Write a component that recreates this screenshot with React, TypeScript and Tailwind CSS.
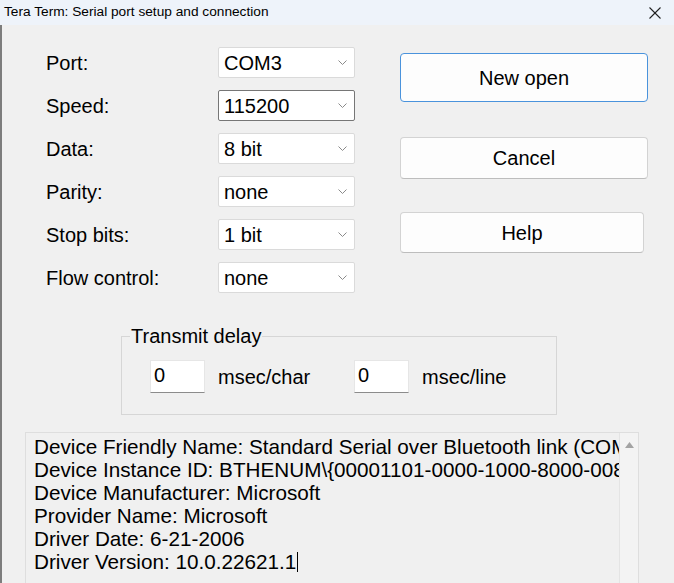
import React from 'react'

const FONT = { fontFamily: '"Liberation Sans", Arial, sans-serif' }

const fields: { label: string; value: string; focused?: boolean }[] = [
  { label: 'Port:', value: 'COM3' },
  { label: 'Speed:', value: '115200', focused: true },
  { label: 'Data:', value: '8 bit' },
  { label: 'Parity:', value: 'none' },
  { label: 'Stop bits:', value: '1 bit' },
  { label: 'Flow control:', value: 'none' },
]

const infoLines = [
  'Device Friendly Name: Standard Serial over Bluetooth link (COM3)',
  'Device Instance ID: BTHENUM\\{00001101-0000-1000-8000-00805F9B34FB}',
  'Device Manufacturer: Microsoft',
  'Provider Name: Microsoft',
  'Driver Date: 6-21-2006',
]

function Combo({ value, focused }: { value: string; focused?: boolean }): React.JSX.Element {
  return (
    <div
      className={
        'flex h-[31px] w-[137px] items-center justify-between rounded-[2px] border bg-white pl-[5px] pr-[7px] ' +
        (focused ? 'border-[#767676]' : 'border-[#dadada]')
      }
    >
      <span className="text-[20px] leading-none text-black">{value}</span>
      <svg width="9" height="5" viewBox="0 0 9 5" aria-hidden="true">
        <polyline points="0.5,0.5 4.5,4.5 8.5,0.5" fill="none" stroke="#8a8a8a" strokeWidth="1" />
      </svg>
    </div>
  )
}

function DelayInput(): React.JSX.Element {
  return (
    <div className="flex h-[33px] w-[55px] items-start border border-[#e6e6e6] border-b-[#8c8c8c] bg-white pl-[3px] pt-[4px]">
      <span className="text-[20px] leading-[20px] text-black">0</span>
    </div>
  )
}

export default function App(): React.JSX.Element {
  return (
    <div className="flex h-[583px] w-[674px] flex-col overflow-hidden bg-[#f0f0f0]" style={FONT}>
      {/* title bar */}
      <div className="flex h-[25px] shrink-0 items-center justify-between bg-[#eef3fa] pl-[4px] pr-[13px]">
        <span className="text-[13.7px] text-black">Tera Term: Serial port setup and connection</span>
        <svg width="12" height="12" viewBox="0 0 12 12" aria-hidden="true">
          <line x1="0.5" y1="0.5" x2="11.5" y2="11.5" stroke="#222" strokeWidth="1.1" />
          <line x1="11.5" y1="0.5" x2="0.5" y2="11.5" stroke="#222" strokeWidth="1.1" />
        </svg>
      </div>

      <div className="flex min-h-0 flex-1 flex-col border-l-2 border-[#7d7d7d]">
        {/* settings + buttons */}
        <div className="flex pl-[44px] pt-[22px]">
          <div className="flex flex-col gap-[12px]">
            {fields.map((f) => (
              <div key={f.label} className="flex items-center">
                <span className="w-[172px] text-[20px] text-black">{f.label}</span>
                <Combo value={f.value} focused={f.focused} />
              </div>
            ))}
          </div>
          <div className="ml-[45px] flex flex-col text-[20px] text-black">
            <button className="mt-[6px] h-[49px] w-[248px] rounded-[4px] border border-[#4a93dc] bg-[#fdfdfd]">
              New open
            </button>
            <button className="mt-[35px] h-[42px] w-[248px] rounded-[4px] border border-[#d3d3d3] border-b-[#bdbdbd] bg-[#fdfdfd]">
              Cancel
            </button>
            <button className="mt-[33px] h-[41px] w-[244px] rounded-[4px] border border-[#d3d3d3] border-b-[#bdbdbd] bg-[#fdfdfd]">
              Help
            </button>
          </div>
        </div>

        {/* transmit delay */}
        <fieldset className="ml-[119px] mt-[32px] w-[436px] border border-[#d6d6d6] p-0">
          <legend className="ml-[8px] px-[1px] text-[20px] leading-[23px] text-black">Transmit delay</legend>
          <div className="flex items-center pb-[21px] pl-[28px] pt-[12px] text-[20px] text-black">
            <DelayInput />
            <span className="ml-[13px] w-[136px]">msec/char</span>
            <DelayInput />
            <span className="ml-[13px]">msec/line</span>
          </div>
        </fieldset>

        {/* device info, clipped on the right like the original edit box */}
        <div className="ml-[23px] mt-[17px] flex min-h-0 w-[614px] flex-1 border border-b-0 border-[#dedede]">
          <div className="min-w-0 flex-1 overflow-hidden whitespace-nowrap pl-[8px] pt-[2px] text-[20.7px] leading-[23px] text-black">
            {infoLines.map((l) => (
              <div key={l}>{l}</div>
            ))}
            <div className="flex items-center">
              <span>Driver Version: 10.0.22621.1</span>
              <span className="ml-[1px] inline-block h-[20px] w-px bg-black" />
            </div>
          </div>
          <div className="flex w-[19px] shrink-0 justify-center border-l border-[#e4e4e4] bg-[#f3f3f3] pt-[9px]">
            <svg width="9" height="6" viewBox="0 0 9 6" aria-hidden="true">
              <polygon points="4.5,0 9,6 0,6" fill="#a3a3a3" />
            </svg>
          </div>
        </div>
      </div>
    </div>
  )
}
